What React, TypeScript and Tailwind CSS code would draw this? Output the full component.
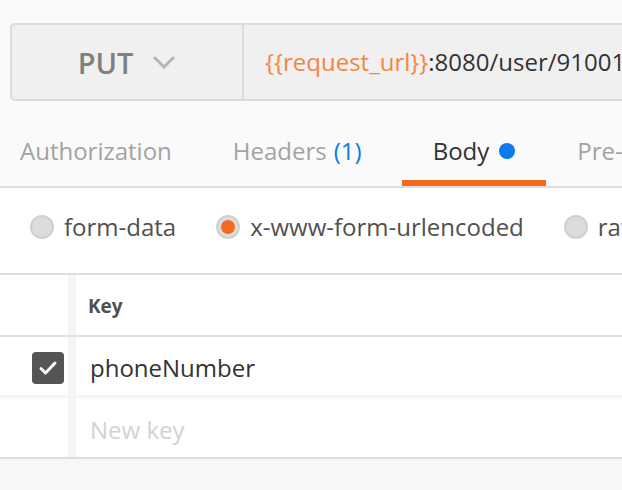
import React from "react";

const font = { fontFamily: '"Open Sans", "Liberation Sans", sans-serif' };

function Radio({ checked, label }: { checked?: boolean; label: string }) {
  return (
    <div className="flex items-center shrink-0">
      <span className="w-[24px] h-[24px] rounded-full bg-[#dcdcdc] border-2 border-[#d0d0d0] flex items-center justify-center shrink-0">
        {checked && <span className="w-[14px] h-[14px] rounded-full bg-[#f26b21]" />}
      </span>
      <span className="ml-[10px] text-[24px] leading-none text-[#505050] whitespace-nowrap">{label}</span>
    </div>
  );
}

export default function App() {
  return (
    <div className="w-[622px] h-[490px] overflow-hidden bg-[#fafafa] flex flex-col" style={font}>
      {/* request bar */}
      <div className="pt-[23px] pl-[10px]">
        <div className="h-[78px] w-[640px] flex bg-[#f0f0f0] border-2 border-[#dcdcdc] rounded-l-[5px]">
          <div className="w-[232px] shrink-0 flex items-center justify-center gap-[19px] border-r-2 border-[#dcdcdc]">
            <span className="text-[29px] font-semibold text-[#808080] leading-none">PUT</span>
            <svg width="24" height="14" viewBox="0 0 24 14" fill="none">
              <path d="M2 2 L12 12 L22 2" stroke="#b4b4b4" strokeWidth="3" />
            </svg>
          </div>
          <div className="flex items-center pl-[21px] text-[24px] leading-none whitespace-nowrap">
            <span className="text-[#f5853f]">{"{{request_url}}"}</span>
            <span className="text-[#333333]">:8080/user/91001</span>
          </div>
        </div>
      </div>

      {/* tabs */}
      <div className="h-[87px] flex items-end border-b-2 border-[#dedede] whitespace-nowrap">
        <div className="ml-[20px] h-[70px] flex items-center text-[24px] text-[#a3a3a3]">Authorization</div>
        <div className="ml-[61px] h-[70px] flex items-center text-[24px] text-[#a3a3a3]">
          Headers <span className="ml-[7px] text-[#097bed]">(1)</span>
        </div>
        <div className="ml-[40px] h-[70px] px-[31px] flex items-center text-[24px] text-[#333333] border-b-[6px] border-[#f26b21] pt-[6px]">
          Body
          <span className="ml-[10px] w-[16px] h-[16px] rounded-full bg-[#097bed]" />
        </div>
        <div className="ml-[31px] h-[70px] flex items-center text-[24px] text-[#a3a3a3]">Pre-request Script</div>
      </div>

      {/* body type */}
      <div className="h-[87px] bg-white flex items-center pl-[30px] pb-[8px] gap-[40px] border-b-2 border-[#dedede]">
        <Radio label="form-data" />
        <Radio checked label="x-www-form-urlencoded" />
        <Radio label="raw" />
      </div>

      {/* table */}
      <div className="bg-white border-b-2 border-[#dcdcdc]">
        <div className="h-[62px] flex border-b-2 border-[#e0e0e0]">
          <div className="w-[68px] shrink-0" />
          <div className="w-[8px] shrink-0 bg-[#f5f5f5]" />
          <div className="flex items-center pl-[12px] pt-[2px] text-[19px] font-bold text-[#505050]">Key</div>
        </div>
        <div className="h-[61px] flex border-b-[3px] border-[#f4f4f4]">
          <div className="w-[68px] shrink-0 flex items-center justify-end pr-[4px] pt-[4px]">
            <span className="w-[32px] h-[32px] rounded-[4px] bg-[#555555] flex items-center justify-center">
              <svg width="20" height="16" viewBox="0 0 20 16" fill="none">
                <path d="M3 8.5 L7.5 13 L17 3" stroke="#ffffff" strokeWidth="3" strokeLinecap="round" strokeLinejoin="round" />
              </svg>
            </span>
          </div>
          <div className="w-[8px] shrink-0 bg-[#f5f5f5]" />
          <div className="flex items-center pl-[14px] pt-[4px] text-[24px] text-[#333333]">phoneNumber</div>
        </div>
        <div className="h-[59px] flex">
          <div className="w-[68px] shrink-0" />
          <div className="w-[8px] shrink-0 bg-[#f5f5f5]" />
          <div className="flex items-center pl-[14px] pt-[4px] text-[24px] text-[#d2d2d2]">New key</div>
        </div>
      </div>
      <div className="flex-1 bg-[#f7f7f7]" />
    </div>
  );
}
